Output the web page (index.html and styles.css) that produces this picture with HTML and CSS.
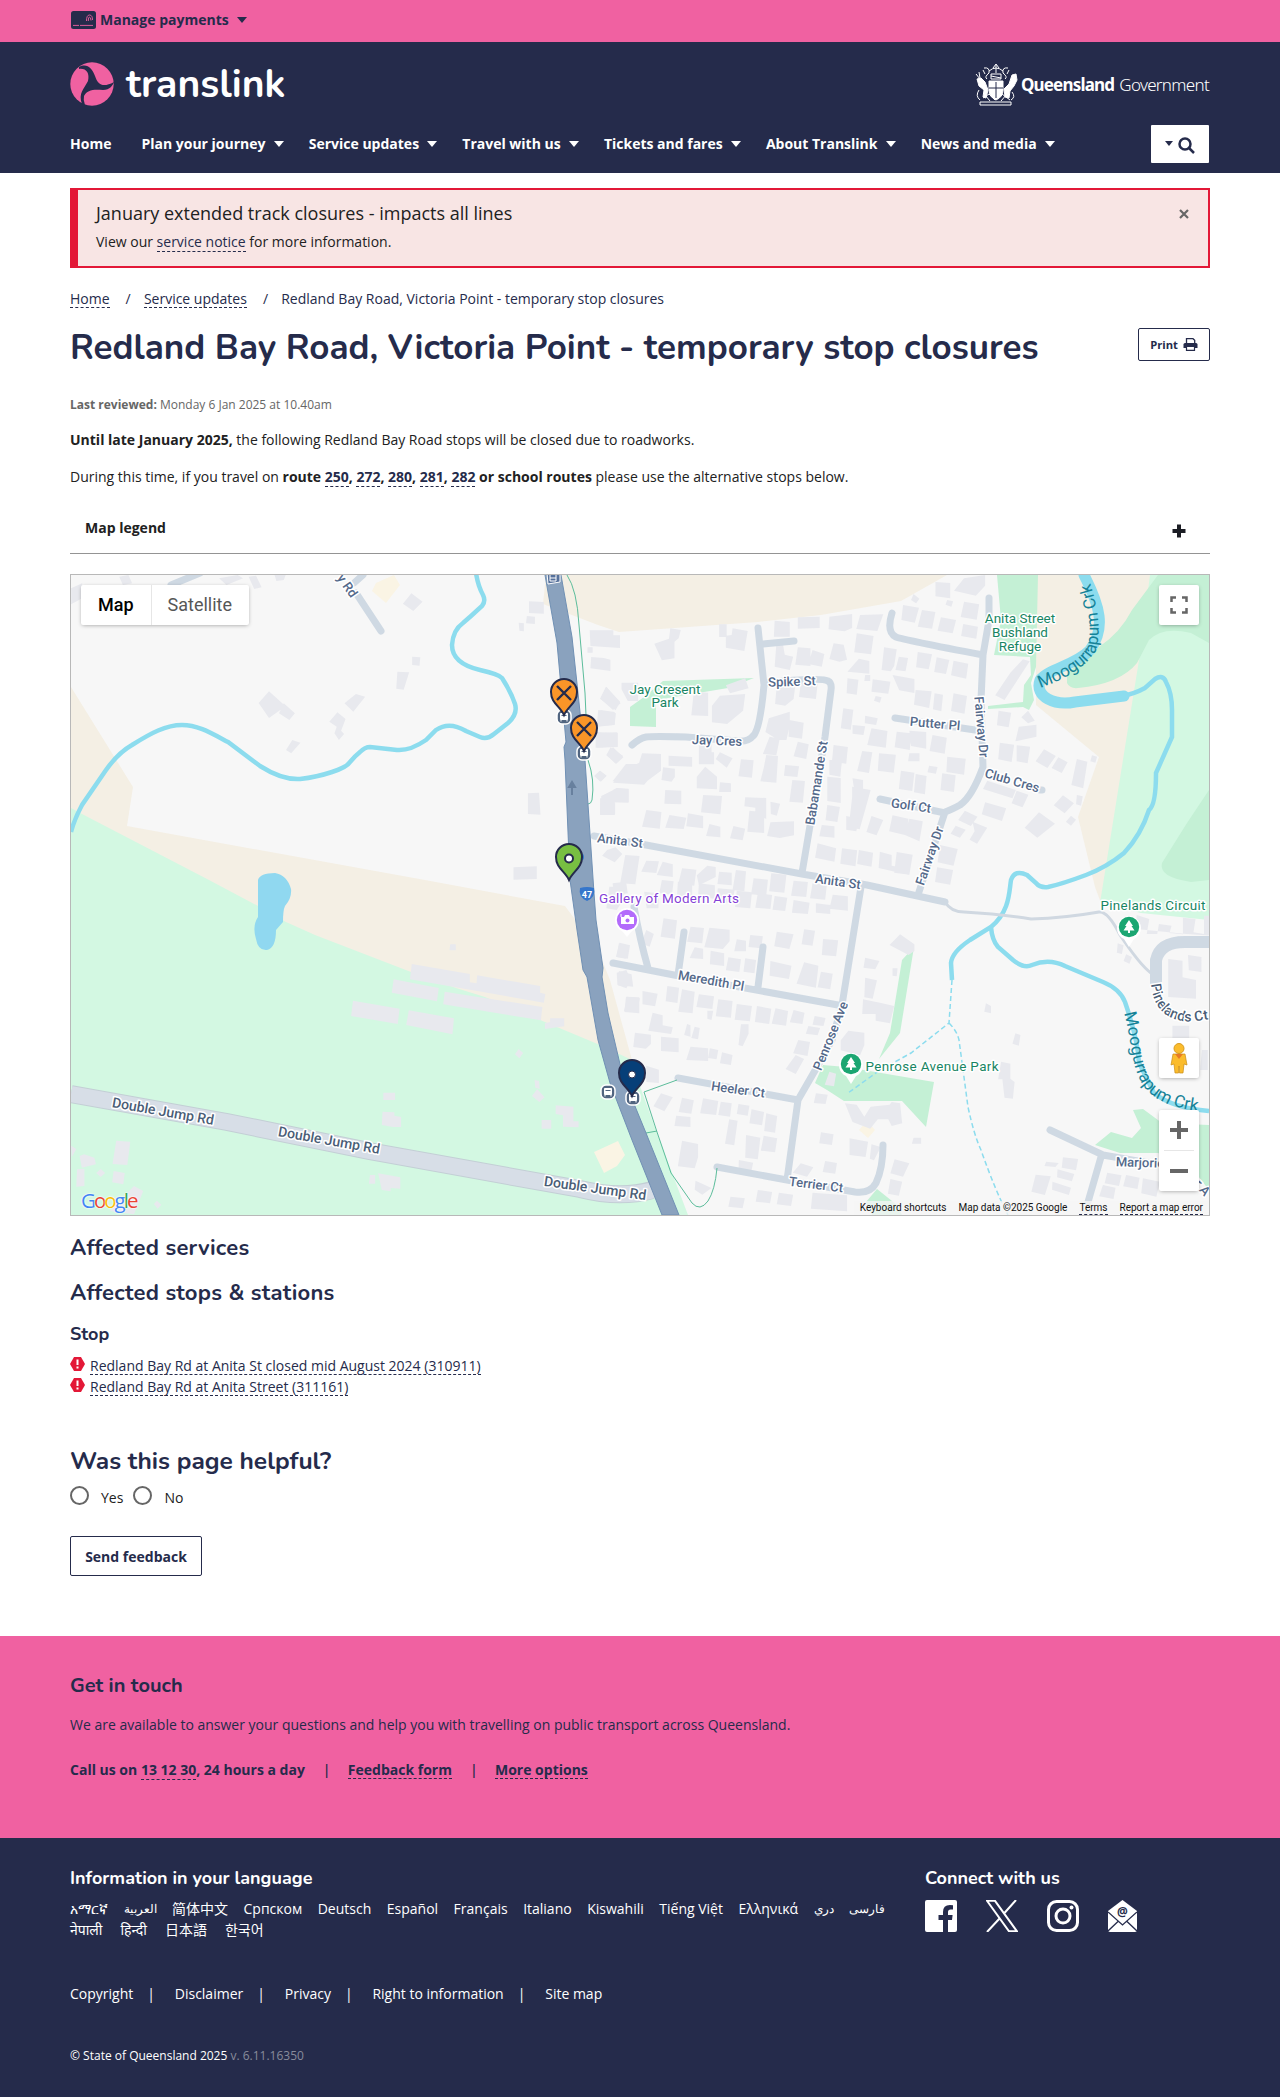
FILE: index.html
```html
<!DOCTYPE html>
<html lang="en">
<head>
<meta charset="utf-8">
<title>Redland Bay Road, Victoria Point - temporary stop closures | Translink</title>
<link rel="stylesheet" href="styles.css">
</head>
<body>
<div class="topbar"><div class="wrap topbar-row">
  <svg class="card" viewBox="0 0 25 18"><rect width="25" height="18" rx="2.5" fill="#252b4b"/><path d="M2 14.400h6M9 14.400h13M15.500 10q0-6 3-6t3 5M17.300 10q0-4 1.200-4t1.500 3.500" stroke="#f061a1" stroke-width=".9" fill="none"/></svg>
  <span>Manage payments</span><i class="caret"></i>
</div></div>

<header class="header"><div class="wrap">
  <div class="brand">
    <div class="logo">
      <svg viewBox="0 0 44 44"><circle cx="22" cy="22" r="21.700" fill="#f061a1"/><path d="M9 5C17 1 22 6 25 14C28 23 33 26 44 20C43 23 40 28 33 28C23 27 17 28 14 34Q13 38 15 43L12 42C8 31 14 27 18 19C20 11 16 6 9 7Z" fill="#252b4b"/></svg>
      <span>translink</span>
    </div>
    <div class="gov">
      <svg viewBox="0 0 44 42" fill="none" stroke="#fff"><path d="M15 17h14v9q0 7-7 10q-7-3-7-10z" fill="#fff"/><path d="M22 18v16M15 24h14" stroke="#252b4b"/><path d="M17 10h10v5H17zM15 7q7-6 14 0M19 4l3-4 3 4M22 1v8M10 4q6-1 5 5q-5 4-2 6M34 4q-6-1-5 5q5 4 2 6M9 6l2 4M35 6l-2 4M17 12l10 2"/><path d="M3 15l4-1 4 4 3 8-2 8-3-1 1-7-5-4z M42 10l-4 1-3 9-5 5 1 8 4 1 1-7 4-5 3-6z" fill="#fff"/><path d="M2 10l4 5M5 8l1 6M5 26q-4 6 1 10M38 28q4 5-1 8M9 34l6-4 6 6 7-6 8 6M11 31l5 6M33 30l-6 7M6 38h31v3H6z"/></svg>
      <span class="gov-b">Queensland</span><span class="gov-l">Government</span>
    </div>
  </div>
  <nav class="nav">
    <a class="n-home">Home</a>
    <a>Plan your journey<i class="caret"></i></a>
    <a>Service updates<i class="caret"></i></a>
    <a>Travel with us<i class="caret"></i></a>
    <a>Tickets and fares<i class="caret"></i></a>
    <a>About Translink<i class="caret"></i></a>
    <a>News and media<i class="caret"></i></a>
    <button class="search" aria-label="Search"><i class="caret"></i><svg viewBox="0 0 17 17"><circle cx="7" cy="7" r="5.500"/><path d="M11 11l5 5"/></svg></button>
  </nav>
</div></header>

<main class="wrap">
  <section class="alert">
    <div><h2>January extended track closures - impacts all lines</h2><p>View our <a>service notice</a> for more information.</p></div>
    <svg viewBox="0 0 10 10"><path d="M1 1l8 8M9 1L1 9"/></svg>
  </section>
  <nav class="crumbs"><a>Home</a><span>/</span><a>Service updates</a><span>/</span>Redland Bay Road, Victoria Point - temporary stop closures</nav>
  <div class="title"><h1>Redland Bay Road, Victoria Point - temporary stop closures</h1>
    <button class="print">Print <svg viewBox="0 0 15 13"><path d="M3.500 5V.7h6.500l1.700 1.600V5" fill="none" stroke="#252b4b" stroke-width="1.300"/><path d="M2 5h11q1.500 0 1.500 1.500V10H.5V6.500Q.5 5 2 5z" fill="#252b4b"/><path d="M3.500 8.500h8v3.800h-8z" fill="#fff" stroke="#252b4b" stroke-width="1.200"/></svg></button></div>
  <p class="reviewed"><b>Last reviewed:</b> Monday 6 Jan 2025 at 10.40am</p>
  <p class="para"><b>Until late January 2025,</b> the following Redland Bay Road stops will be closed due to roadworks.</p>
  <p class="para">During this time, if you travel on <b>route <a>250</a>, <a>272</a>, <a>280</a>, <a>281</a>, <a>282</a> or school routes</b> please use the alternative stops below.</p>
  <div class="legend"><b>Map legend</b><svg viewBox="0 0 14 14"><path d="M7 .5v13M.5 7h13" stroke="#1b1d24" stroke-width="4"/></svg></div>

  <div class="map">
  <svg class="canvas" viewBox="71 575 1138 640">
    <defs>
      <g id="pin"><path d="M0 22C-4 13-13 10-13-1A13 13 0 0 1 13-1C13 10 4 13 0 22z" stroke="#252b4b" stroke-width="2"/></g>
      <g id="bus"><rect x="-7" y="-7" width="14" height="14" rx="5" fill="#516580" stroke="#fff" stroke-width="1.500"/><path d="M-3.500-3.500h7v6h-7zM-3 3v1.500M3 3v1.500" fill="#fff" stroke="#fff"/><path d="M-2.500-1.500h5" stroke="#516580"/></g>
      <g id="tree"><path d="M0 20l-5-8a12 12 0 1 1 10 0z" fill="#fff"/><circle r="10.200" fill="#1ba672"/><path d="M0-7l4 6H2.500l3 4.500H1V6h-2V3.500h-4.500l3-4.500H-4z" fill="#fff"/></g>
      <path id="moo1" d="M1040 688Q1083 673 1096 650Q1104 622 1088 577"/>
      <path id="moo2" d="M1124 1013C1131 1038 1131 1062 1140 1080Q1153 1107 1206 1112"/>
      <path id="pine" d="M1151 984Q1154 1016 1182 1021Q1196 1024 1250 1010"/>
    </defs>
    <path fill="#f7f7f7" d="M71 575h1138v640H71z"/>
    <g fill="#f4efe4">
      <path d="M71 687L133 787L127 826L425 880L565 906L574 918L602 960L610 980L632 1060L500 1100L71 900z"/>
      <path d="M546 575H947L901 601L821 615L758 622L619 632L598 625L543 604z"/>
      <path d="M1036 575H1160V903H1101L1095 887L1078 817L1099 757L1036 705z"/>
    </g>
    <path fill="#d3f8e2" d="M71 808L82 814L209 880L260 907L286 922L315 935L411 972L456 988L485 997L545 1022L600 1045L632 1060L642 1092L657 1133L688 1215H71zM1100 903L1139 660L1150 575H1209V920L1141 913z"/>
    <g fill="#c4f0d5">
      <path d="M1158 575L1132 610Q1120 633 1099 647L1067 673V683Q1070 689 1078 688Q1120 684 1137 663L1149 640Q1163 626 1191 633L1209 643V575z"/>
      <path d="M1209 790L1187 823L1162 863Q1158 877 1191 882L1209 880z"/>
      <path d="M997 575H1038L1036 667L1031 683L1034 700L1029 710L1023 707L988 709V706L1023 702L1024 685L1031 675L1030 657L994 655L1001 620z"/>
      <path d="M630 726V707L644 697L663 681L754 678L728 688L656 700V727z"/>
      <path d="M914 947L902 960L890 1033L879 1059L900 1033z"/>
      <path d="M815 1083L823 1065L846 1067L934 1082L926 1127L902 1101H844L827 1090z"/>
      <path d="M1095 1145L1111 1132L1132 1138L1141 1128L1133 1110L1143 1109L1162 1123L1209 1125V1190L1191 1167L1158 1153H1120z"/>
      <path d="M866 1202L877 1189L897 1205L902 1215H872z"/>
    </g>
    <path fill="#faf4e4" d="M376 583l18-8 6 10-14 18-14-12zM594 1152l24-11 7 14-8 11-13 7zM859 1130l8-9 8 9-7 8z"/>

    <!-- buildings, north-west -->
    <g fill="#e8e9ee" transform="translate(60 560) scale(.3699 .3333)">
      <path d="M30 85l30-15v45l-30 18zM160 50l25-5 10 25-25 5zM430 55l50-10 15 10-45 20zM510 50l20-3 15 35-20 5zM580 45h30l-5 15-20 3zM950 100l30 25-25 28-28-22zM1268 124l40 2v35l-40-2zM1262 168l22 2v22l-24-2zM1240 188l14 2v24l-12-2zM565 394l45 45-45 35-28-45zM605 430l30 30-15 20-28-20zM800 402l25 8-32 45-24-25zM750 457l22 20-12 35 8 10-14 18-12-20 6-20-20-15zM628 540l22 8-25 32-14-10zM912 335l32 2-15 52-20-3zM952 290l22 2-2 25-20-2zM1265 700l30-2 4 66-34-2zM1226 922l63-3v38l-63 2z"/>
      <path d="M1432 211h64v15h18v38l-80-6zM1426 262h14v16h-14zM1436 291l34 3 18 5v34l-54-8zM1476 380l38 45-12 26-42-35zM1518 368h45v55h-28l-17-35zM1455 450l48 10-4 35-48 4zM1448 516l60 3v42l-60 2zM1495 562l28 30-20 20-25-28zM1530 612h40v58l-76-6zM1460 632l18 15-16 18-16-18zM1495 690l10-6 32 2v40l-40-6zM1460 715h40v50h-40z"/>
    </g>
    <!-- buildings, north-east -->
    <g fill="#e8e9ee" transform="translate(560 560) scale(.4209 .3333)">
      <path d="M262 205l25 5-5 25-10 10v50l-30 6-18-50 35-15zM378 193h18v38h-18zM410 205l36 8-8 60-44-10v-36l14-2zM510 182l36 4v44h-38zM565 172l52-2v34l-52 2zM640 170l54-8v42l-18 10-38-6zM713 165l55-2-14 50-50-6zM815 135l38 8-10 45-32-8zM840 102l14 14-8 14-12-10zM892 66l35 3v46l-35-6zM960 55l50-10v32l-22 30-52-15zM960 125l36 8-6 46-38-8zM860 150l32 6-8 50-34-6zM905 172l36 8-8 40-36-8zM958 192l35 8-4 36-36-8zM920 120l14 4-4 16-14-6z"/>
      <path d="M514 252l16 2 4 30 20 6-8 40-36-10zM565 262l30 3v53l-36-4zM600 270l28 12-6 38-32-8zM650 250l24 4 8 45-18 6-24-8zM705 220l40 8-6 55-40-6zM770 262l30 6-6 50-8 16-22-4zM805 290l22 4-6 40-24-4zM850 276l34 7-8 45-30-6zM895 292l30 8-8 42-28-6zM935 302l35 9-5 45-36-10zM710 296l25 7v38l-52-6zM1100 298l16 6-60 116-22-14 36-68zM683 355l26 4-4 45-24-4zM743 358l42 7-5 36-40-6zM790 345l52 12v42l-36-8zM845 390l38 4-6 50-36-10zM890 400l20 4-4 50-20-6zM935 400l32 8-6 53-32-8zM572 368l40 4-4 45-40-6zM515 375l44 2-4 40-20 20-24-5zM440 355l8 30-44 15-10-24zM380 407l60-5-5 50-38 40-36-5v-50zM110 380l34 50-18 20-30-34zM96 450l34 6v38l-40 6zM318 395l34 3v70l-40-2zM725 345h12v18h-14zM750 408l14 4-4 16-14-6z"/>
      <path d="M673 445l24 4-6 60-24-4zM725 467l30 8-4 20-27-5zM695 495l30 4-4 26-26-4zM740 505l38 8-4 50-44-8zM800 515l35 5-4 50-36-8zM830 512l40 4v50l-36-8zM885 525l34 8-5 48-36-8zM1042 452l30 6-6 44-28-6zM1112 452l16 30-16 8-16-18zM1090 500l42-6v36l-50 14zM1045 548l34 6-6 52-32-8zM1085 556l32 4-6 50-26-6zM1150 568l28 20-20 36-28-20zM1184 592l22 15-14 32-24-15zM1228 597l25 8-10 80-28-10zM1264 586l12 4-4 18-12-4zM496 475l50-20v40l-8 45-24-4-26-20zM545 480l34 8-4 48-32-6zM498 530l24 6-8 50-32-4zM565 545l26 8-6 44-30-8zM88 520l48-3v42l-48 4zM120 562l30 26-18 22-22-24zM195 580l45 2v50l-32 30-8 12-74-6 22-35 40-25zM258 587l56 4v29l-56-3zM330 550l30-8v35h-30zM330 577h36v36h-36zM380 577l30 18-14 28-26-26zM430 598l30 3-4 52-32-4zM490 585l28 3-4 80-38-4 8-40zM535 615l33 4-4 32-32-4zM95 632l14 16-14 16-14-16zM245 622l28 4v25l-8 14-24-5zM345 620l28 30v38l-48-3v-35zM380 667l26 3v26h-28zM552 660l30 3-5 65-32-3zM650 555l34 6-4 50-34-6zM640 600h30l-4 50-26-6zM718 573l24 4-8 62-28-6zM758 580l40 4-5 54-38-6zM830 580h24v24h-27zM877 617l20 4-4 20-20-4zM920 590l44 6-4 48-42-8zM635 650l32 4v75l-32-6zM695 655l25 5v26l-22-4zM694 680l44 10-6 28-20 90-26-6 8-90zM810 632l32 6-5 55-32-6zM845 642l26 6-4 55-26-6zM908 640l32 6-4 50-32-6z"/>
      <path d="M135 685l28 3v40l-65-2v-18zM97 728l34 2v32h-36zM250 690l38 2v41l-40-2zM340 705l45 3-4 55-46-6zM440 712l50 2v62l-26-8v-25l-26-4zM500 725l23 6-8 36-14-5zM635 735l30 6-6 45-28-5zM1015 662l68 28-8 25-70-28zM1085 692l28 12-14 38-26-12zM1010 727l50 18-10 38-48-20zM1138 757l38 34-42 42-30-30zM1195 706l26 24-22 30-26-24zM1228 705l14 4-4 28-12-4zM1214 767l12 12-12 18-12-12zM205 750l36 6-4 50-42-6zM260 765l40 8-6 34-44-4zM304 760l36 8v37l-40-6zM355 792l26 8v32l-34-4zM412 798l28 8-6 35-30-6zM450 752l35 5v62l-40-4zM500 787l56-3v42l-34 8-30-6zM622 795l30 4v34l-36-4zM680 768l30 8-6 38-24-5zM740 768l28 12-16 46-24-10zM790 766l38 10-6 50-40-12zM830 776l32 8-8 60-36-20zM962 752l30 18-16 28-30-18zM940 797l24 12-14 24-22-12zM980 785l35 18-24 48-18-12 12-25z"/>
      <path d="M112 870l20-8 16 20-18 25-30-20zM155 885l34 3-10 85-36-3zM205 902l30 2-6 35-36-4zM244 905l24 8v38l-38-6zM290 925l34 4-5 48-38-5zM350 917l20 4v30l-40 25-5-30zM378 935l30 3v38l-34-4zM418 930l24 4-4 60-28-4zM460 955l34 4-4 48-36-4zM502 940l36 4-5 54-36-4zM555 962l34 4-4 45-36-4zM600 970l34 4-4 45-36-4zM612 850l44 15-4 40-46-12zM670 865l36 6-4 48-36-8zM710 870l34 8-4 42-34-8zM760 875l28 10v32l44 10-5 17-70-20zM800 876l38 8-8 60-36-6zM903 855l42 12-10 50-38-10zM896 922l38 8-7 44-36-8z"/>
    </g>
    <!-- buildings, south-west -->
    <g fill="#e8e9ee" transform="translate(60 880) scale(.3699 .3333)">
      <path d="M951 252l157 30v25l18 3 2-24 170 32v20l14 4-4 26-362-70zM902 298l122 26-5 40-122-26zM1040 335l264 46-4 40-264-48zM792 362l126 24-5 46-126-24zM943 391l122 24-4 48-125-28zM1325 415h38v24l-52 8v-17l14-4zM1055 193h15v18h-17zM1240 507l12 12-10 16-12-12zM1283 600l12 3 2 24-12-4zM1290 627l20 25-14 14-20-18zM1340 676l48 4v44h14v18l-42-2v-34l-20-4zM1302 720h26v26h-26zM874 638h32v22h-32zM872 695l32 2v10l18 4v30h-22l-30-6zM838 885h14v26h-17zM860 880l60 12v34l-26-2v10l-24-4zM152 782l38 3-8 70-40-3zM65 823l28 10 4 20-38 10-6-35zM30 797l14 10-12 24zM46 868l20-2v52l-22 2zM110 867l12 12-12 12-12-12zM145 873l30 6-4 34-30-6zM200 918l25 15-25 70-65-10zM262 962l12 12-10 12-10-14z"/>
      <path d="M1485 20h40v35l-20 35-28-5zM1513 188l28 8-6 40-32-6zM1505 278l26-8 12 30-12 25-24-10zM1530 350l36 2v48l-40-4z"/>
    </g>
    <!-- buildings, south-east -->
    <g fill="#e8e9ee" transform="translate(560 880) scale(.4209 .3333)">
      <path d="M125 10l32-5 4 35-32 6zM200 35l34 5v45h-28zM205 150l18 12-10 38-20-10zM140 190l24 8-8 38-22-5zM242 0l28 4-4 40-30-4zM280 5l34 2v45l-36-4zM330 10l38 6v40l-40-4zM375 25l40 4-6 40-38-4zM420 32l36 5-4 48-36-4zM470 40l34 5-4 42-36-4zM510 48l30 5-5 40-30-4zM555 60l38 8-4 34-38-4zM608 70l34 5v27l-34-4zM648 44l36 5v43l-44-6zM246 115l32 6-5 55-34-6zM310 140l32 4-4 46-36-5zM355 143l48 6v35l-16 23-44-5zM420 178l22 4v32h-28zM452 165l30 4-4 36-30-4zM515 155l40 8-10 44-36-8zM580 148l26 4-6 45-26-4zM625 177l36 4-5 48-34-4zM320 202l20 4v31l-32-3zM358 212l32 8v38l-34-5zM400 232l30 6-4 38-32-5zM440 235l26 5-4 40-26-5zM500 243l50 14-6 40-46-10zM580 247l34 10-6 66-46-12zM620 275l28 6-6 47-30-6zM808 163l34 30v20l-14 12-45-30zM725 233l34 10-10 25-28-5zM725 293l28 8-10 55-20-4zM790 265h12l-2 24-10-2zM140 273l30 10 4 37-36-4zM720 358l40 10 34 10-10 52-34-8v-20h-32z"/>
      <path d="M160 350l30 5-8 42-30-4zM196 333l36 8-6 38-30-6zM255 318l28 5-4 46-28-5zM290 328l30 7-5 65-34-5zM330 343l36 6-4 38-38-6zM376 358l34 5-4 50-36-4zM350 392h14l-4 28-10-4zM420 372l36 6-5 46-36-5zM468 378l34 8-5 46-34-6zM512 385l30 8-5 44-34-6zM555 390l26 8-5 34-30-5zM605 408l26 6-5 24-26-4zM590 438l28 6-6 22-28-5zM220 398l24 8v30l24 6-4 20-54-10zM430 433h18v28l-14 38-10-4zM302 432l8 4v34l-15-5zM320 440l12 4-4 34-16-4zM178 458l38 6v28l-12 14-30-5zM240 470l42 5v42l-42-4zM310 500l42 5v38l-52-3zM356 505l20 5-4 28-20-4zM385 517l25 8-4 30-26-5zM566 480l28 6-6 42-34-8zM560 525l20 12-20 45-24-15zM685 452l38 6v38l-10 30-46-15v-30z"/>
      <path d="M205 557l30 12v40l-30-3zM240 640l28 12-20 42-26-15zM290 653l28 8-6 40-30-5zM340 655l36 8-5 42-38-5zM382 665l26 5-4 40-28-5zM424 672l26 5-4 30-26-5zM455 688l30 8-5 40-30-6zM490 700l26 8-5 50-26-5zM276 707l34 4v30l-38-3zM402 718l20 4-8 74-22-5zM442 765l34 8-6 65-30-5zM484 767l32 8-5 42-34-5zM290 782l38 10v40l-8 33-40-6zM322 902l38 22-22 20-18-15zM425 840l34 8-5 28-30-5zM572 850l30 12-15 28-34-12zM630 843l28 6-4 32-30-5zM470 930l34 6-5 34-34-5zM520 938l34 6-5 34-34-5zM600 938l82 8v48l-86-8zM405 950l34 5-5 30-34-5zM608 640l28 4-5 28-28-3zM640 575l16 6-5 38-22-5zM677 670l28 4 18 36 15-30 45-6 5-8 20 4 5 60-25 8-8-20h-25l-18 28-42-20zM688 775l44 10-6 46-38-6zM620 757l30 6-4 32-30-5zM740 793l22 8-16 40-10-5zM840 773h18v18h-22zM795 838l35 12-15 40-30-10zM785 897l28 8-8 42-26-6zM1012 370l12 8v22l-16-5zM1082 460l12 5-4 32-15-6zM1048 545l22 6v45l10 10-4 50-20-3-5-55h-10z"/>
      <path d="M1370 105l30 12-6 45h25l4-30 30 5-5 22 32 4v-50l30 4-5 40 25 5v-55h14v60l-55-5-120-15zM1325 190l14 6-4 26-12-4zM1345 223l14 8-6 20-14-8zM1445 237l34 5v50l32 8v56l-66-5zM1492 225l32 6v45l-30-5zM1455 437h40v52l-40-8zM1525 510h14v60h-18zM1130 884l36 5-14 56-32-10zM1155 845l30 4-8 12-26-3zM1195 832l36 5-5 34-34-8zM1182 868l40 14-6 22-35-12zM1170 905l44 18-5 22-40-16zM1300 878l34 8-6 32-34-8zM1345 885l32 8-5 34-34-8zM1290 915l30 8-5 34-34-8zM1385 895l40 10-8 45-36-10z"/>
    </g>

    <g class="stream">
      <path d="M71 832Q74 820 82 805L106 770Q118 753 132 745C151 733 166 725 182 725C198 725 211 733 228 742L260 766Q282 780 300 779Q317 777 332 772Q347 767 350 762Q355 756 360 752Q365 747 370 747L397 750Q410 751 426 740L436 730Q449 721 466 731L480 737Q487 740 494 734L508 723Q518 714 515 704Q511 692 502 678Q498 674 480 670C463 666 452 658 452 645Q453 630 463 623L471 616L482 606Q486 601 483 595Q478 586 476 573"/>
      <path d="M1122 696Q1134 694 1145 688L1155 679Q1163 674 1166 682Q1172 693 1172 710V737L1156 773Q1156 805 1149 810Q1141 835 1124 853Q1107 867 1086 875Q1062 884 1048 887Q1040 888 1036 883L1027 875Q1015 869 1011 880C1009 892 1010 911 991 927L970 940Q952 952 951 963L952 980M991 927Q992 940 998 947L1013 960Q1024 969 1032 965Q1049 958 1065 966L1103 982Q1120 989 1125 1002Q1138 1040 1139 1063L1154 1093Q1172 1108 1209 1111"/>
    </g>
    <path class="river" d="M1084 575C1100 606 1106 628 1090 650C1076 665 1048 669 1040 680C1034 697 1055 706 1075 702L1124 696"/>
    <path fill="#90d8f0" d="M258 880Q260 873 275 873Q287 875 291 889Q292 898 285 906Q283 910 283 922L276 930Q276 948 267 950Q258 951 256 939Q252 926 258 917z"/>
    <path class="trickle" d="M952 980L949 1023L911 1053Q895 1062 880 1070L848 1093M949 1023Q957 1031 959 1040L968 1107Q974 1135 981 1150Q995 1190 1008 1215"/>

    <path class="lane" d="M945 902Q951 912 964 912Q1000 914 1031 919Q1065 918 1099 912Q1108 911 1120 935Q1140 965 1151 973"/>
    <g class="road">
      <path d="M594 836L646 845L802 874L867 885L945 902M758 628L764 685Q760 730 753 736Q748 742 738 741L686 737Q653 736 646 737Q640 738 632 745M763 644L794 641M764 683Q822 677 828 681Q832 683 831 690L825 737L802 873M892 613Q886 632 896 637Q904 640 983 655M989 598V620L983 655L981 700L983 767Q972 797 960 805Q951 810 945 812L918 895M895 718L975 730M880 799L945 813M861 887L842 1005L832 1040L817 1067L798 1100L787 1180M613 963L674 975L838 1005M634 907Q640 940 648 968M684 932L678 975M763 947L758 987M678 1078L798 1100M717 1167L787 1180L855 1192Q870 1194 876 1183Q883 1168 883 1145M1050 1130L1103 1155L1149 1163M1101 1157L1088 1202M171 585L200 573M363 575L354 583M356 593L381 631M1040 790h2"/>
      <path d="M1156 983V960Q1160 942 1185 942H1212" stroke-width="12"/>
    </g>
    <g class="foot"><path d="M567 575Q577 590 579 625L585 693L588 760Q595 780 592 800Q591 804 588 804M677 1080L644 1092L657 1132L671 1173L692 1203Q700 1212 708 1201Q715 1190 717 1168M646 1133L657 1131"/></g>
    <path d="M71 1094L227 1122L369 1151L580 1189Q620 1199 652 1190" fill="none" stroke="#c3cfd5" stroke-width="18"/>
    <path d="M71 1094L227 1122L369 1151L580 1189Q620 1199 654 1190" fill="none" stroke="#d7dee7" stroke-width="16"/>
    <path d="M545 575H561L572 637L578 693L585 760L594 893L596 920L603 968L602 977L608 1013L623 1077L646 1133L679 1215H662L632 1140L610 1083L598 1040L587 977L583 970L577 930L570 880L565 760L564 747L566 742L557 643z" fill="#8aa2be" stroke="#7090b4"/>
    <path d="M572 795v-9m-3 1l3-5 3 5z" stroke="#68809e" stroke-width="2" fill="#68809e"/>
    <path d="M547 573h13v9l-12 2z" fill="#56719b" stroke="#fff"/><path d="M550 575v6h6v-6m-6 3h6" stroke="#fff" fill="none"/>

    <g class="lbl">
      <text transform="translate(347 586) rotate(55)" y="4">y Rd</text>
      <text x="792" y="686" transform="rotate(-2 792 682)">Spike St</text>
      <text x="717" y="745" transform="rotate(2 717 741)">Jay Cres</text>
      <text transform="translate(935 724) rotate(5)" y="4">Putter Pl</text>
      <text transform="translate(1012 781) rotate(16)" y="4">Club Cres</text>
      <text transform="translate(911 806) rotate(8)" y="4">Golf Ct</text>
      <text transform="translate(981 727) rotate(85)" y="4">Fairway Dr</text>
      <text transform="translate(930 856) rotate(-71)" y="4">Fairway Dr</text>
      <text transform="translate(817 783) rotate(-81)" y="4">Babamande St</text>
      <text transform="translate(620 841) rotate(7)" y="4">Anita St</text>
      <text transform="translate(838 882) rotate(8)" y="4">Anita St</text>
      <text transform="translate(711 981) rotate(10)" y="4">Meredith Pl</text>
      <text transform="translate(831 1036) rotate(-68)" y="4">Penrose Ave</text>
      <text transform="translate(738 1090) rotate(8)" y="4">Heeler Ct</text>
      <text transform="translate(816 1185) rotate(7)" y="4">Terrier Ct</text>
      <text transform="translate(1140 1163) rotate(2)" y="4">Marjorie</text>
      <text transform="translate(1202 1188) rotate(50)" y="4">r A</text>
    </g>
    <g class="lbl dark">
      <text class="start"><textPath href="#pine">Pinelands Ct</textPath></text>
      <text transform="translate(163 1112) rotate(10)" y="4">Double Jump Rd</text>
      <text transform="translate(329 1141) rotate(10)" y="4">Double Jump Rd</text>
      <text transform="translate(595 1189) rotate(8)" y="4">Double Jump Rd</text>
    </g>
    <g class="lbl creek"><text class="start"><textPath href="#moo1">Moogurrapum Crk</textPath></text><text class="start"><textPath href="#moo2">Moogurrapum Crk</textPath></text></g>
    <g class="lbl park">
      <text x="665" y="694">Jay Cresent</text><text x="665" y="707">Park</text>
      <text x="1020" y="623">Anita Street</text><text x="1020" y="637">Bushland</text><text x="1020" y="651">Refuge</text>
      <text x="1153" y="910" textLength="105">Pinelands Circuit</text><text x="932" y="1071" textLength="133">Penrose Avenue Park</text>
    </g>
    <g class="lbl art"><text x="669" y="903" textLength="140">Gallery of Modern Arts</text></g>
    <use href="#tree" x="1129" y="927"/><use href="#tree" x="851" y="1064"/>
    <path d="M627 937l-5-6a12 12 0 1 1 10 0z" fill="#fff"/><circle cx="627" cy="920" r="10.200" fill="#b36bfb"/><path d="M621 917h3l1-2h4l1 2h4v7h-13z" fill="#fff"/><circle cx="627.500" cy="920.500" r="2" fill="#b36bfb"/><path d="M621 914v3" stroke="#fff"/>
    <path d="M580 888q7-2 14 0 2 9-7 13-9-4-7-13z" fill="#3576cb"/><text class="num" x="587" y="897.500">47</text>
    <use href="#bus" x="564" y="717"/><use href="#bus" x="584" y="753"/><use href="#bus" x="608" y="1092"/><use href="#bus" x="633" y="1098"/>
    <circle cx="580" cy="857" r="4" fill="#3576cb"/>
    <use href="#pin" x="564" y="693" fill="#fa9528"/><use href="#pin" x="584" y="729" fill="#fa9528"/><use href="#pin" x="569" y="858" fill="#78bf42"/><use href="#pin" x="632" y="1074" fill="#063f78"/>
    <path d="M557 686l14 14M571 686l-14 14M577 722l14 14M591 722l-14 14" stroke="#252b4b" stroke-width="2.400"/>
    <circle cx="569" cy="858.500" r="4" fill="#fff" stroke="#252b4b" stroke-width="2"/><circle cx="632" cy="1074.500" r="3.500" fill="#fff" stroke="#252b4b"/>
  </svg>
  <div class="ctl types"><b>Map</b><span>Satellite</span></div>
  <div class="ctl full"><svg viewBox="0 0 18 18"><path d="M1.500 6V1.500H6M12 1.500h4.500V6M16.500 12v4.500H12M6 16.500H1.500V12"/></svg></div>
  <div class="ctl peg"><svg viewBox="0 0 18 31"><circle cx="9" cy="5.500" r="5" fill="#fbbc2c" stroke="#d89b20"/><path d="M3 11h12l2 11-3-1-1 9H9.500l-.5-7-.5 7H5l-1-9-3 1z" fill="#fbbc2c" stroke="#c98d18" stroke-width=".7"/><path d="M5 11h8l-4 5z" fill="#e87a25"/></svg></div>
  <div class="ctl zoom"><svg viewBox="0 0 18 18"><path d="M9 0v18M0 9h18"/></svg><i></i><svg viewBox="0 0 18 18"><path d="M0 9h18"/></svg></div>
  <div class="google"><span class="b">G</span><span class="r">o</span><span class="y">o</span><span class="b">g</span><span class="g">l</span><span class="r">e</span></div>
  <div class="credits"><span>Keyboard shortcuts</span><span>Map data ©2025 Google</span><span><a>Terms</a></span><span><a>Report a map error</a></span></div>
  </div>

  <h2 class="h2 services">Affected services</h2>
  <h2 class="h2">Affected stops &amp; stations</h2>
  <h3 class="h3">Stop</h3>
  <ul class="stops">
    <li><svg viewBox="0 0 15 14"><path d="M4 0h7l4 7-4 7H4L0 7z" fill="#e31837"/><path d="M7.500 2.500V8M7.500 9.500v2" stroke="#fff" stroke-width="2"/></svg><a>Redland Bay Rd at Anita St closed mid August 2024 (310911)</a></li>
    <li><svg viewBox="0 0 15 14"><path d="M4 0h7l4 7-4 7H4L0 7z" fill="#e31837"/><path d="M7.500 2.500V8M7.500 9.500v2" stroke="#fff" stroke-width="2"/></svg><a>Redland Bay Rd at Anita Street (311161)</a></li>
  </ul>
  <h2 class="helpful">Was this page helpful?</h2>
  <div class="radios"><i></i><label>Yes</label><i></i><label>No</label></div>
  <button class="send">Send feedback</button>
</main>

<section class="touch"><div class="wrap">
  <h2>Get in touch</h2>
  <p>We are available to answer your questions and help you with travelling on public transport across Queensland.</p>
  <div class="call"><span>Call us on <a>13 12 30</a>, 24 hours a day</span><em>|</em><a>Feedback form</a><em>|</em><a>More options</a></div>
</div></section>

<footer class="footer"><div class="wrap">
  <div class="cols">
    <div><h2>Information in your language</h2>
      <div class="langs"><div><a>አማርኛ</a><a class="arabic">العربية</a><a>简体中文</a><a>Српском</a><a>Deutsch</a><a>Español</a><a>Français</a><a>Italiano</a><a>Kiswahili</a><a>Tiếng Việt</a><a>Ελληνικά</a><a class="arabic">دري</a><a class="arabic">فارسی</a></div>
      <div class="second"><a>नेपाली</a><a>हिन्दी</a><a>日本語</a><a>한국어</a></div></div></div>
    <div><h2>Connect with us</h2>
      <div class="social">
        <svg viewBox="0 0 32 32"><path d="M2 0h28q2 0 2 2v28q0 2-2 2h-7V20h4l.6-5H23v-3q0-2.500 2.500-2.500H28V5.200Q18 3.500 18 12v3h-4.500v5H18v12H2q-2 0-2-2V2q0-2 2-2z" fill="#fff"/></svg>
        <svg viewBox="0 0 32 32"><path d="M1 .8h8l22 30.500h-8z M30 0L18 13.500M14 18L1 32" fill="none" stroke="#fff" stroke-width="2"/></svg>
        <svg viewBox="0 0 32 32"><g fill="none" stroke="#fff" stroke-width="3"><rect x="1.500" y="1.500" width="29" height="29" rx="8"/><circle cx="16" cy="16" r="7"/></g><circle cx="24.500" cy="7.500" r="2" fill="#fff"/></svg>
        <svg class="mail" viewBox="0 0 29 32"><path d="M14.500 0L29 11v19q0 2-2 2H2q-2 0-2-2V11z" fill="#fff"/><path d="M0 12l14.500 13L29 12M0 31l10-9.500M29 31l-10-9.500" fill="none" stroke="#252b4b" stroke-width="1.300"/><text x="14.500" y="16" text-anchor="middle" font-size="12">@</text></svg>
      </div></div>
  </div>
  <div class="links"><a>Copyright</a><i>|</i><a>Disclaimer</a><i>|</i><a>Privacy</a><i>|</i><a>Right to information</a><i>|</i><a>Site map</a></div>
  <div class="copy">© State of Queensland 2025 <span>v. 6.11.16350</span></div>
</div></footer>
</body>
</html>
```
FILE: styles.css
```css
*{box-sizing:border-box}
body{margin:0;background:#fff;color:#212121;font:14px/22px "Open Sans","Noto Sans","Noto Sans CJK SC","Noto Sans CJK KR",sans-serif}
h1,h2,h3,p,ul{margin:0;padding:0}
svg{display:block}
b{font-weight:700}
.wrap{width:1140px;margin:0 auto}
.caret{display:inline-block;border:5px solid transparent;border-top:6px solid currentColor;border-bottom:0}
.topbar{height:42px;background:#f061a1;color:#252b4b;font-weight:700}
.topbar-row{display:flex;align-items:center;height:39px}
.card{width:25px;height:18px;margin:0 4px 0 1px}
.topbar .caret{margin-left:8px}
.header{height:131px;background:#252b4b;color:#fff}
.brand{display:flex;justify-content:space-between;padding-top:20px;height:83px}
.logo{display:flex;height:44px;font:700 39px/46px "Nunito",Lato,sans-serif}
.logo svg{width:44px;height:44px;margin-right:12px}
.gov{display:flex;align-items:center;height:46px;font:17px/22px "Noto Sans",sans-serif;margin-right:1px}
.gov svg{width:44px;height:42px;margin-right:3px}
.gov-b{font-weight:700;letter-spacing:-.8px;margin-right:5px}
.gov-l{font-weight:300;letter-spacing:-.7px}
.nav{display:flex;align-items:center;height:38px;font-weight:700}
.nav a{margin-right:25.2px;white-space:nowrap}
.nav .n-home{margin-right:30px}
.nav .caret{margin:0 0 2px 8px}
.search{display:flex;align-items:center;justify-content:center;width:58px;height:38px;margin:0 1px 0 auto;padding:0;border:0;border-radius:1px;background:#fff;color:#252b4b}
.nav .search .caret{margin:0 5px 2px 0;border-width:5px 4.500px 0}
.search svg{width:17px;height:17px;margin-top:3px;fill:none;stroke:#252b4b;stroke-width:2.500}
.alert{display:flex;justify-content:space-between;height:80px;margin-top:15px;padding:13px 19px 0 18px;border:2px solid #e31837;border-left-width:8px;background:#f8e5e4}
.alert h2{font-size:18px;line-height:20px;font-weight:400}
.alert p{margin-top:8px}
.alert svg{width:10px;height:10px;margin-top:6px;fill:none;stroke:#666;stroke-width:2.200}
main a,.touch a{border-bottom:1px dashed #252b4b;color:#252b4b}
.crumbs{display:flex;height:22px;margin-top:20px;color:#252b4b}
.crumbs a{height:20px}
.crumbs span{width:34.300px;padding-left:16px}
.title{display:flex;justify-content:space-between;height:69px;padding-top:17px}
h1,.h2,.h3,.helpful,.touch h2,.footer h2{font-family:"Nunito",Lato,sans-serif;font-weight:700;white-space:nowrap}
main h1,.h2,.h3,.helpful{color:#252b4b}
h1{font-size:35px;line-height:42px}
.print{display:flex;align-items:center;justify-content:center;gap:5px;width:72px;height:33px;margin-top:1px;padding:0;border:1px solid #252b4b;border-radius:2px;background:#fff;color:#252b4b;font:700 11.200px "Open Sans",sans-serif}
.print svg{width:15px;height:13px}
.reviewed{margin-top:16px;height:20px;font-size:12px;line-height:20px;color:#666}
.para{height:22px;margin-top:15px}
.reviewed+.para{margin-top:14px}
.legend{display:flex;justify-content:space-between;height:52px;margin-top:14px;padding:15px 24px 0 15px;border-bottom:1px solid #949494}
.legend svg{width:14px;height:14px;margin-top:7px}
.map{position:relative;height:642px;margin-top:20px;border:1px solid #b8b8b8;overflow:hidden;font-family:Roboto,sans-serif}
.canvas{width:1138px;height:640px}
.stream{fill:none;stroke:#8cdcee;stroke-width:4.500}
.river{fill:none;stroke:#8cdcee;stroke-width:11;stroke-linecap:round}
.trickle{fill:none;stroke:#8cdcee;stroke-width:1.500;stroke-dasharray:5 3}
.lane{fill:none;stroke:#d0d8e1;stroke-width:3}
.road{fill:none;stroke:#cfd9e3;stroke-width:7;stroke-linecap:round;stroke-linejoin:round}
.foot{fill:none;stroke:#5cbd9b;stroke-width:1}
.lbl{font:500 13px Roboto,sans-serif;fill:#54698a;stroke:#fff;stroke-width:3px;stroke-linejoin:round;paint-order:stroke;text-anchor:middle}
.dark{font-size:14px;fill:#4a5d76}
.start{text-anchor:start}
.creek{font-size:17px;font-weight:400;fill:#158297;stroke:none}
.park{font-size:13.500px;font-weight:400;fill:#188563}
.art{font-size:13.500px;font-weight:400;fill:#8541d6}
.num{font:700 9px Roboto,sans-serif;fill:#fff;text-anchor:middle}
.ctl{position:absolute;display:flex;background:#fff;border-radius:2px;box-shadow:0 1px 4px -1px rgba(0,0,0,.4);align-items:center;justify-content:center}
.types{left:10px;top:10px;height:40px;font-size:18px;color:#565656}
.types b{padding:0 17px;line-height:40px;color:#000;font-weight:500;border-right:1px solid #e6e6e6}
.types span{padding:0 17px 0 16px}
.full{right:10px;top:10px;width:40px;height:40px}
.full svg,.zoom svg{width:18px;height:18px;fill:none;stroke:#666;stroke-width:3}
.full svg{stroke-width:2.500}
.peg{right:10px;top:463px;width:40px;height:40px}
.peg svg{width:18px;height:31px}
.zoom{right:10px;top:535px;width:40px;height:81px;flex-direction:column;gap:11px}
.zoom i{width:30px;height:1px;background:#e6e6e6}
.zoom svg{stroke-width:4}
.google{position:absolute;left:10px;bottom:2px;font:400 20.500px/26px "Open Sans",sans-serif;letter-spacing:-2px;text-shadow:0 0 2px #fff,0 0 2px #fff}
.b{color:#4285f4}.r{color:#ea4335}.y{color:#fbbc05}.g{color:#34a853}
.credits{position:absolute;right:0;bottom:0;display:flex;height:14px;background:rgba(245,245,245,.75);font-size:10px;line-height:14px;color:#111}
.credits span{padding:0 6px}
.credits a{display:block;height:14px;color:#111}
.h2{font-size:22px;line-height:30px;margin-top:15px;letter-spacing:.25px}
.services{margin-top:17px}
.h3{font-size:18px;line-height:24px;margin-top:14px}
.stops{list-style:none;margin-top:9px}
.stops li{display:flex;height:21px;line-height:21px}
.stops a{height:20px}
.stops svg{width:15px;height:14px;margin:2px 5px 0 0}
.helpful{font-size:24.500px;line-height:34px;margin-top:47px}
.radios{display:flex;height:24px;margin-top:6px;line-height:27px}
.radios i{width:19px;height:19px;margin:2px 12px 0 0;border:2px solid #666;border-radius:50%}
.radios label{margin-right:10px}
.send{width:132px;height:40px;margin:28px 0 60px;padding:0;border:1px solid #252b4b;border-radius:2px;background:#fff;color:#252b4b;font:700 14px "Open Sans",sans-serif;display:block}
.touch{height:202px;background:#f061a1;color:#252b4b;padding-top:38px}
.touch h2{font-size:20px;line-height:24px}
.touch p{margin-top:16px}
.call{display:flex;margin-top:23px;font-weight:700}
.call a{height:20px}
.call em{width:43px;padding-left:18px;font-style:normal;font-weight:600}
.footer{height:259px;padding-top:28px;background:#252b4b;color:#fff}
.footer h2{font-size:18px;line-height:24px}
.cols{display:grid;grid-template-columns:855px 1fr;height:117px}
.langs{margin-top:8px;line-height:21px}
.langs>div{display:flex;height:21px}
.langs a{margin-right:15.500px;white-space:nowrap}
.langs .second a{margin-right:18px}
.langs .arabic{font-size:12px}
.social{display:flex;gap:29px;margin-top:10px}
.social svg{width:32px;height:32px}
.social .mail{width:29px}
.social text{fill:#252b4b;font-weight:700}
.links{display:flex}
.links i{width:41.500px;padding-left:14px;font-style:normal}
.copy{margin-top:40px;font-size:12px}
.copy span{color:#888b9b}
```
